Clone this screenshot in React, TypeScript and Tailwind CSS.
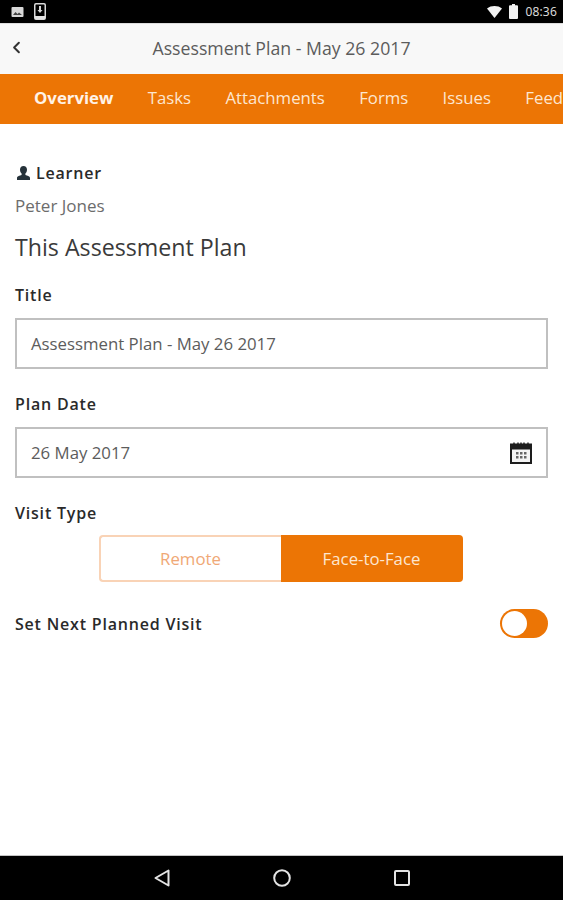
import { ChevronLeft } from 'lucide-react';

const TABS = ['Overview', 'Tasks', 'Attachments', 'Forms', 'Issues', 'Feedback'];

function StatusBar() {
  return (
    <div className="flex h-[23px] shrink-0 items-center justify-between bg-black pl-[11px] pr-[6px] text-[#e0e0e0]">
      <div className="flex items-center gap-[10px]">
        <svg width="13" height="12" viewBox="0 0 13 12">
          <rect x="0.5" y="1" width="12" height="10" rx="1" fill="#d8d8d8" />
          <path d="M2 9l2.500-3 2 2 1.500-1.500L11 9z" fill="#444" />
        </svg>
        <svg width="12" height="17" viewBox="0 0 12 17">
          <rect x="0.75" y="0.75" width="10.5" height="15.5" rx="1.2" fill="none" stroke="#d8d8d8" strokeWidth="1.5" />
          <rect x="1" y="13" width="10" height="3" fill="#e4e4e4" />
          <path d="M5 3h2v4h1.500L6 10 3.500 7H5z" fill="#d8d8d8" />
        </svg>
      </div>
      <div className="flex items-center">
        <svg width="15" height="12" viewBox="0 0 15 12">
          <path d="M0 2.500C4 -0.800 11 -0.800 15 2.500L7.500 12z" fill="#f2f2f2" />
        </svg>
        <svg className="ml-[7px]" width="9" height="15" viewBox="0 0 9 15">
          <path d="M3 0h3v1.200h2a1 1 0 0 1 1 1V14a1 1 0 0 1-1 1H1a1 1 0 0 1-1-1V2.200a1 1 0 0 1 1-1h2z" fill="#f2f2f2" />
        </svg>
        <span className="ml-[7px] text-[12px] font-medium tracking-[0.2px]">08:36</span>
      </div>
    </div>
  );
}

function Field({ label, value, children }: { label: string; value: string; children?: React.ReactNode }) {
  return (
    <div>
      <div className="text-[16px] leading-[20px] font-semibold tracking-[0.8px] text-[#2a2a2a]">{label}</div>
      <div className="mt-[13px] flex h-[51px] items-center justify-between border-2 border-[#c0c0c0] bg-white pl-[14px] pr-[14px] text-[16.8px] text-[#5c5c5c]">
        <span>{value}</span>
        {children}
      </div>
    </div>
  );
}

function CalendarIcon() {
  return (
    <svg width="22" height="22" viewBox="0 0 22 22">
      <rect x="1" y="2.500" width="20" height="18.500" fill="#f4f4f4" stroke="#1d1d1d" strokeWidth="2" />
      <rect x="1" y="2.500" width="20" height="5" fill="#1d1d1d" />
      <path d="M4 0.500v3M8 0.500v3M11 0.500v3M14 0.500v3M18 0.500v3" stroke="#1d1d1d" strokeWidth="1.400" />
      <path d="M6 10h2.500v2.500H6zM10 10h2.500v2.500H10zM14 10h2.500v2.500H14zM6 14h2.500v2.500H6zM10 14h2.500v2.500H10zM14 14h2.500v2.500H14z" fill="#666" />
    </svg>
  );
}

export default function App() {
  return (
    <div className="flex h-[900px] w-[563px] flex-col overflow-hidden bg-white font-['Open_Sans',sans-serif]">
      <StatusBar />
      <div className="relative flex h-[51px] shrink-0 items-center justify-center border-t border-[#ddd] bg-[#f8f8f8] pb-[2px] text-[17.7px] text-[#5c5c5c]">
        <ChevronLeft className="absolute left-[7px] top-[14px] text-[#333]" size={19} strokeWidth={2.500} />
        Assessment Plan - May 26 2017
      </div>
      <div className="flex h-[50px] shrink-0 items-center overflow-hidden whitespace-nowrap bg-[#ec7505] pb-[2px] pl-[34px] text-[16.8px] text-[#fde6d0]">
        {TABS.map((tab, i) => (
          <span key={tab} className={i === 0 ? 'mr-[34.3px] font-bold text-[#fff3e8]' : 'mr-[34.3px]'}>
            {tab}
          </span>
        ))}
      </div>

      <div className="flex-1 px-[15px] pt-[38px]">
        <div className="flex items-center text-[16px] leading-[22px] font-semibold tracking-[0.8px] text-[#2a2a2a]">
          <svg className="ml-px mr-[5px]" width="15" height="14" viewBox="0 0 15 14">
            <path d="M7.500 0c2.200 0 3.500 1.700 3.500 3.800 0 1.500-.7 3-1.600 3.800v1.300c1.800.5 4.600 1.200 4.600 3V14H1v-2.100c0-1.800 2.800-2.500 4.600-3V7.600C4.700 6.800 4 5.300 4 3.800 4 1.700 5.300 0 7.500 0z" fill="#26323a" />
          </svg>
          Learner
        </div>
        <div className="mt-[11px] text-[17px] leading-[22px] text-[#6c6c6c]">Peter Jones</div>
        <div className="mt-[16px] text-[23.2px] leading-[28px] text-[#3a3a3a]">This Assessment Plan</div>

        <div className="mt-[24px] flex flex-col gap-[25px]">
          <Field label="Title" value="Assessment Plan - May 26 2017" />
          <Field label="Plan Date" value="26 May 2017">
            <CalendarIcon />
          </Field>
        </div>

        <div className="mt-[25px] text-[16px] leading-[20px] font-semibold tracking-[0.8px] text-[#2a2a2a]">Visit Type</div>
        <div className="mt-[12px] flex justify-center pr-[2px] text-[16.8px]">
          <div className="flex h-[47px] w-[182px] items-center justify-center rounded-l-[4px] border-2 border-r-0 border-[#f9d3b6] bg-white text-[#f0a876]">
            Remote
          </div>
          <div className="flex h-[47px] w-[182px] items-center justify-center rounded-r-[4px] bg-[#ec7505] text-[#fde6d0]">
            Face-to-Face
          </div>
        </div>

        <div className="mt-[27px] flex items-center justify-between">
          <span className="text-[16px] font-semibold tracking-[0.8px] text-[#2a2a2a]">Set Next Planned Visit</span>
          <div className="flex h-[29px] w-[48px] items-center rounded-full bg-[#ec7505] pl-[2px]">
            <div className="h-[25px] w-[25px] rounded-full bg-white" />
          </div>
        </div>
      </div>

      <div className="flex h-[45px] shrink-0 items-center justify-center gap-[103px] border-t border-[#c4c4c4] bg-black">
        <svg width="16" height="18" viewBox="0 0 16 18">
          <path d="M14.500 1.500v15L1.500 9z" fill="none" stroke="#e4e4e4" strokeWidth="2" strokeLinejoin="round" />
        </svg>
        <svg width="18" height="18" viewBox="0 0 18 18">
          <circle cx="9" cy="9" r="7.800" fill="none" stroke="#e4e4e4" strokeWidth="2" />
        </svg>
        <svg width="16" height="16" viewBox="0 0 16 16">
          <rect x="1" y="1" width="14" height="14" rx="1" fill="none" stroke="#e4e4e4" strokeWidth="2" />
        </svg>
      </div>
    </div>
  );
}
